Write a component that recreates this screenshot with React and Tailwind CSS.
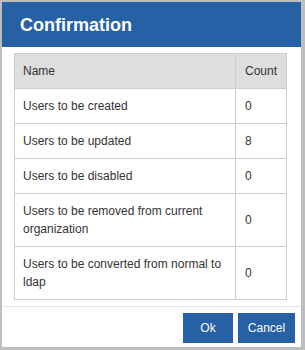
import { useState } from 'react'

const ROWS = [
  { name: 'Users to be created', count: 0 },
  { name: 'Users to be updated', count: 8 },
  { name: 'Users to be disabled', count: 0 },
  { name: 'Users to be removed from current organization', count: 0 },
  { name: 'Users to be converted from normal to ldap', count: 0 },
]

export default function App() {
  const [open, setOpen] = useState(true)

  return (
    <div className="w-[305px] h-[350px] bg-[#bdbdbd] pt-[2px] pl-[2px] font-['Liberation_Sans',Arial,sans-serif]">
      <div className="w-[299px] h-[345px] bg-white flex flex-col">
        {/* Header */}
        <div className="h-[45px] bg-[#2660a5] flex items-center px-[18px]">
          <h1 className="text-[18px] font-bold text-white leading-none">Confirmation</h1>
        </div>

        {/* Body */}
        <div className="flex-1 pt-[6px] pl-[12px] pr-[14px]">
          <table className="w-[273px] border-collapse text-[12px] text-[#333] leading-[18px]">
            <thead>
              <tr className="bg-[#dedede]">
                <th className="border border-[#cccccc] text-left font-normal px-[8px] py-[8px] w-[221px]">Name</th>
                <th className="border border-[#cccccc] text-left font-normal px-[9px] py-[8px]">Count</th>
              </tr>
            </thead>
            <tbody>
              {ROWS.map((r) => (
                <tr key={r.name}>
                  <td className="border border-[#cccccc] px-[8px] py-[8px]">{r.name}</td>
                  <td className="border border-[#cccccc] px-[9px] py-[8px]">{r.count}</td>
                </tr>
              ))}
            </tbody>
          </table>
        </div>

        {/* Footer */}
        <div className="h-[41px] border-t border-[#e5e5e5] flex justify-end items-start gap-[5px] pt-[6px] pr-[6px]">
          <button
            onClick={() => setOpen(!open)}
            className="w-[50px] h-[30px] bg-[#2660a5] text-white text-[12px]"
          >
            Ok
          </button>
          <button className="w-[57px] h-[30px] bg-[#2660a5] text-white text-[12px]">Cancel</button>
        </div>
      </div>
    </div>
  )
}
